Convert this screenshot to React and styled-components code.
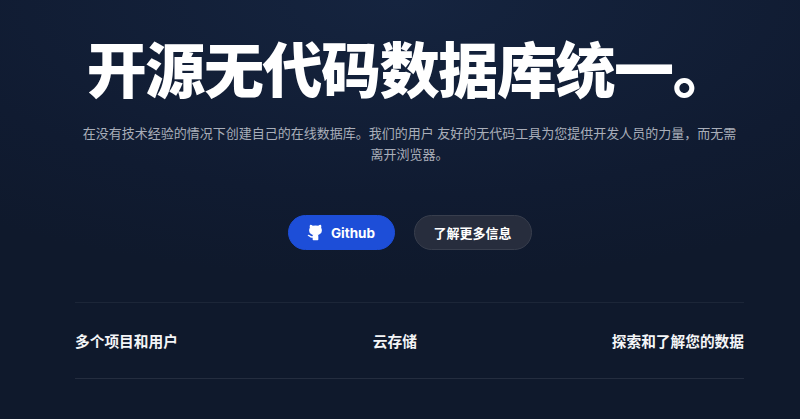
import React from "react"
import styled, { createGlobalStyle } from "styled-components"

const GlobalStyle = createGlobalStyle`
  html, body {
    margin: 0;
    padding: 0;
    height: 100%;
    overflow: hidden;
    background: #0f172a;
  }
  body {
    font-family: Inter, "Noto Sans CJK SC", sans-serif;
  }
`

const Page = styled.div`
  height: 419px;
  overflow: hidden;
  padding: 0 56px 0 75px;
  background: radial-gradient(ellipse 680px 280px at 50% 0, #15243f 0%, #101b31 70%, #0f192c 100%);
`

const Hero = styled.section`
  display: flex;
  flex-direction: column;
  align-items: center;
  width: 669px;
`

const Title = styled.h1`
  align-self: flex-start;
  margin: 26px 0 0;
  width: 668px;
  font-size: 60px;
  line-height: 90px;
  font-weight: 900;
  letter-spacing: -1.4px;
  color: #fff;
  text-align: center;
  white-space: nowrap;
`

const Lead = styled.p`
  margin: 7px 0 0;
  width: 660px;
  font-size: 13px;
  line-height: 21px;
  font-weight: 400;
  color: #a9aeb9;
  text-align: center;
`

const Actions = styled.div`
  display: flex;
  gap: 19px;
  margin-top: 50px;
`

const Button = styled.a`
  display: flex;
  align-items: center;
  justify-content: center;
  gap: 7px;
  box-sizing: border-box;
  height: 35px;
  width: ${p => p.$width};
  border-radius: 18px;
  font-size: ${p => (p.$primary ? "13.5px" : "13px")};
  font-weight: 700;
  color: #fff;
  background: ${p => (p.$primary ? "#1d4ed8" : "#272d3d")};
  border: 1px solid ${p => (p.$primary ? "#1d4ed8" : "#383e4d")};
`

const Features = styled.ul`
  display: flex;
  justify-content: space-between;
  align-items: center;
  list-style: none;
  width: 669px;
  height: 75px;
  margin: 52px 0 0;
  padding: 0;
  border-top: 1px solid #1c2638;
  border-bottom: 1px solid #242d3f;
`

const Feature = styled.li`
  font-size: 14.7px;
  font-weight: 700;
  color: #f4f5f7;
`

const GithubMark = () => (
  <svg width="17" height="17" viewBox="0 0 24 24" fill="currentColor" stroke="currentColor" strokeWidth="2" strokeLinecap="round" strokeLinejoin="round">
    <path d="M15 22v-4a4.8 4.8 0 0 0-1-3.5c3 0 6-2 6-5.5.08-1.25-.27-2.48-1-3.5.28-1.15.28-2.35 0-3.5 0 0-1 0-3 1.5-2.64-.5-5.36-.5-8 0C6 2 5 2 5 2c-.3 1.15-.3 2.35 0 3.5A5.403 5.403 0 0 0 4 9c0 3.5 3 5.5 6 5.5-.39.49-.68 1.05-.85 1.65-.17.6-.22 1.23-.15 1.85v4z" />
    <path d="M9 18c-4.51 2-5-2-7-2" fill="none" />
  </svg>
)

export default function App() {
  return (
    <>
      <GlobalStyle />
      <Page>
        <Hero>
          <Title>开源无代码数据库统一。</Title>
          <Lead>
            在没有技术经验的情况下创建自己的在线数据库。我们的用户 友好的无代码工具为您提供开发人员的力量，而无需离开浏览器。
          </Lead>
          <Actions>
            <Button $primary $width="107px">
              <GithubMark />
              Github
            </Button>
            <Button $width="118px">了解更多信息</Button>
          </Actions>
        </Hero>
        <Features>
          <Feature>多个项目和用户</Feature>
          <Feature>云存储</Feature>
          <Feature>探索和了解您的数据</Feature>
        </Features>
      </Page>
    </>
  )
}
